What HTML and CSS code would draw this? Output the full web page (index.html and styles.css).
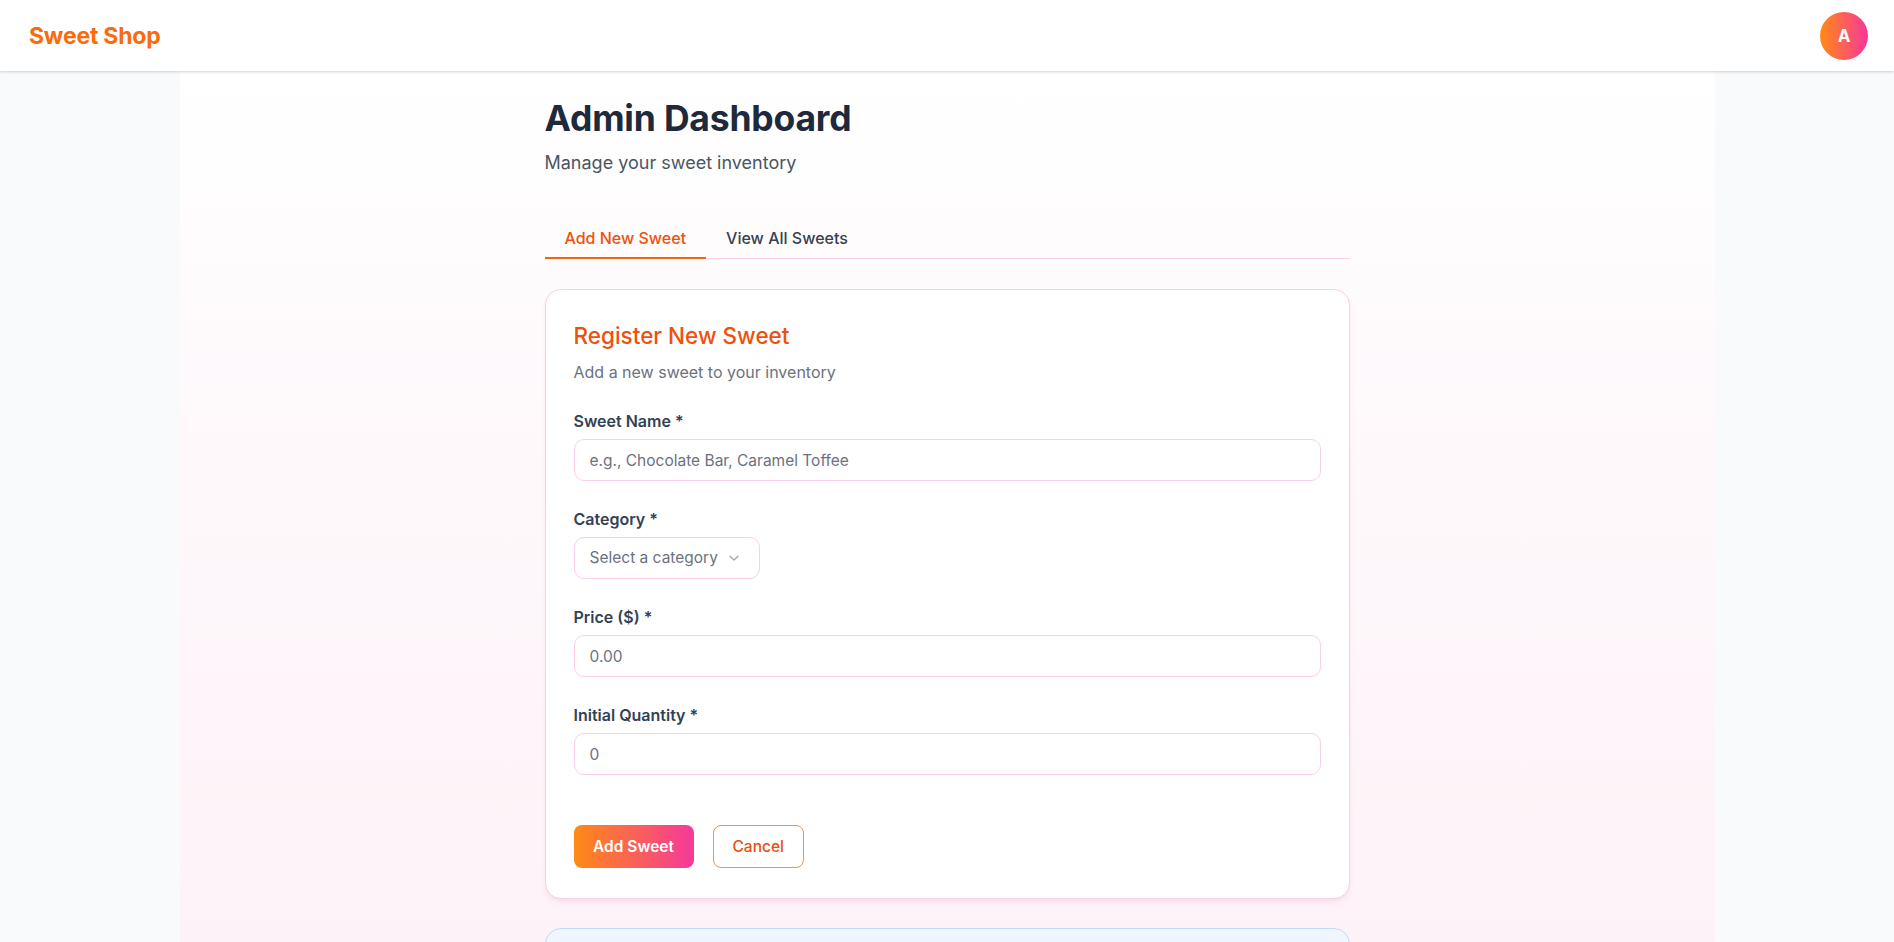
FILE: index.html
```html
<!DOCTYPE html>
<html lang="en">
<head>
<meta charset="utf-8">
<title>Sweet Shop – Admin Dashboard</title>
<link rel="stylesheet" href="styles.css">
</head>
<body>
<header class="topbar">
  <div class="brand">Sweet Shop</div>
  <div class="avatar">A</div>
</header>
<div class="shell">
  <main class="content">
    <h1 class="page-title">Admin Dashboard</h1>
    <p class="page-sub">Manage your sweet inventory</p>
    <nav class="tabs">
      <button class="tab active">Add New Sweet</button>
      <button class="tab">View All Sweets</button>
    </nav>
    <section class="card">
      <h2 class="card-title">Register New Sweet</h2>
      <p class="card-sub">Add a new sweet to your inventory</p>
      <form class="form">
        <div class="field">
          <label class="label">Sweet Name *</label>
          <input class="input" type="text" placeholder="e.g., Chocolate Bar, Caramel Toffee">
        </div>
        <div class="field">
          <label class="label">Category *</label>
          <div class="select-wrap">
            <select class="select">
              <option>Select a category</option>
            </select>
            <svg class="chev" width="12" height="12" viewBox="0 0 12 12" fill="none"><path d="M2 4.2 6 8l4-3.8" stroke="#9ca3af" stroke-width="1.2" stroke-linecap="round" stroke-linejoin="round"/></svg>
          </div>
        </div>
        <div class="field">
          <label class="label">Price ($) *</label>
          <input class="input" type="text" placeholder="0.00">
        </div>
        <div class="field">
          <label class="label">Initial Quantity *</label>
          <input class="input" type="text" placeholder="0">
        </div>
        <div class="actions">
          <button type="button" class="btn btn-primary">Add Sweet</button>
          <button type="button" class="btn btn-outline">Cancel</button>
        </div>
      </form>
    </section>
    <section class="card info"></section>
  </main>
</div>
</body>
</html>
```
FILE: styles.css
```css
* { box-sizing: border-box; }
html, body { margin: 0; padding: 0; }
body {
  background: #f9fafb;
  font-family: Inter, "Noto Sans", sans-serif;
  color: #1f2937;
  overflow: hidden;
  height: 942px;
}
.topbar {
  position: relative;
  z-index: 2;
  height: 71px;
  background: #fff;
  display: flex;
  align-items: center;
  justify-content: space-between;
  padding: 0 26px 0 29px;
  box-shadow: 0 1px 3px rgba(0,0,0,0.12), 0 1px 2px rgba(0,0,0,0.06);
}
.brand {
  font-size: 23px;
  font-weight: 700;
  color: #fb6a0c;
  letter-spacing: -0.2px;
}
.avatar {
  width: 48px;
  height: 48px;
  border-radius: 50%;
  background: linear-gradient(to right, #ff8a14, #f7369c);
  color: #fff;
  font-weight: 700;
  font-size: 17px;
  display: flex;
  align-items: center;
  justify-content: center;
}
.shell {
  max-width: 1535px;
  margin: 0 auto;
  min-height: 871px;
  background: linear-gradient(to bottom, #ffffff 0%, #fef8fb 40%, #fdf1f7 100%);
}
.content {
  width: 805px;
  margin: 0 auto;
  padding-top: 28px;
}
.page-title {
  margin: 0;
  font-size: 35.5px;
  line-height: 40px;
  font-weight: 700;
  color: #1e293b;
  letter-spacing: -0.2px;
}
.page-sub {
  margin: 10px 0 0;
  font-size: 18px;
  line-height: 28px;
  color: #4b5563;
}
.tabs {
  margin-top: 37px;
  display: flex;
  border-bottom: 1px solid #fbcfe8;
}
.tab {
  font-family: inherit;
  background: none;
  border: none;
  border-bottom: 2px solid transparent;
  margin-bottom: -1px;
  padding: 12px 20px 7px;
  font-size: 16px;
  line-height: 24px;
  font-weight: 500;
  color: #374151;
  cursor: pointer;
}
.tab.active {
  color: #f0500c;
  border-bottom-color: #f7630c;
}
.card {
  margin-top: 30px;
  background: #fff;
  border: 1px solid #fbcfe8;
  border-radius: 16px;
  padding: 28px 28px 30px;
  box-shadow: 0 4px 6px -1px rgba(219, 39, 119, 0.08), 0 2px 4px -2px rgba(0, 0, 0, 0.06);
}
.card-title {
  margin: 2px 0 0;
  font-size: 22.5px;
  line-height: 32px;
  font-weight: 500;
  color: #f0500c;
}
.card-sub {
  margin: 8px 0 0;
  font-size: 16px;
  line-height: 24px;
  color: #6b7280;
}
.form {
  margin-top: 25px;
  display: flex;
  flex-direction: column;
  gap: 26px;
}
.field {
  display: flex;
  flex-direction: column;
  gap: 6px;
}
.label {
  font-size: 16px;
  line-height: 24px;
  font-weight: 600;
  color: #334155;
}
.input, .select {
  font-family: inherit;
  font-size: 15.5px;
  line-height: 24px;
  height: 42px;
  border: 1px solid #fbcfe8;
  border-radius: 10px;
  padding: 8px 15px;
  background: #fff;
  color: #1f2937;
  outline: none;
}
.input::placeholder { color: #6b7280; }
.input { width: 100%; }
.select-wrap {
  position: relative;
  width: 186px;
}
.select {
  width: 100%;
  appearance: none;
  -webkit-appearance: none;
  color: #6b7280;
  padding-right: 36px;
}
.chev {
  position: absolute;
  right: 20px;
  top: 15px;
  pointer-events: none;
}
.actions {
  margin-top: 24px;
  display: flex;
  gap: 19px;
}
.btn {
  font-family: inherit;
  height: 43px;
  border-radius: 8px;
  font-size: 15.5px;
  font-weight: 600;
  padding: 0 19px;
  white-space: nowrap;
  cursor: pointer;
}
.btn-primary {
  min-width: 120px;
  border: none;
  color: #fff;
  background: linear-gradient(to right, #ff8a14, #f5399a);
}
.btn-outline {
  min-width: 91px;
  background: #fff;
  border: 1px solid #fb923c;
  color: #ea4e0c;
  font-weight: 500;
}
.card.info {
  margin-top: 29px;
  height: 120px;
  background: #eff6ff;
  border-color: #bfdbfe;
  box-shadow: none;
}
```
